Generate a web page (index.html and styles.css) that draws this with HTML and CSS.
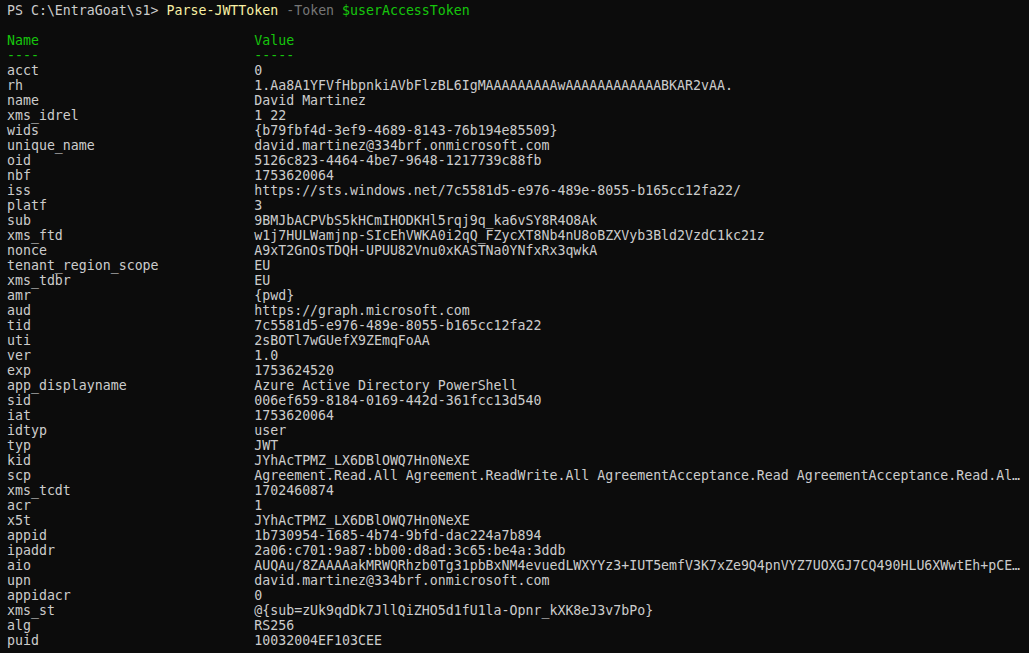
FILE: index.html
```html
<!DOCTYPE html>
<html lang="en">
<head>
<meta charset="utf-8">
<title>PowerShell - Parse-JWTToken</title>
<link rel="stylesheet" href="styles.css">
</head>
<body>
<main class="terminal">
  <div class="line"><span class="prompt">PS C:\EntraGoat\s1&gt; </span><span class="cmd">Parse-JWTToken</span> <span class="param">-Token</span> <span class="var">$userAccessToken</span></div>
  <div class="line"></div>
  <div class="table">
    <span class="head">Name</span><span class="head">Value</span>
    <span class="head">----</span><span class="head">-----</span>
    <span>acct</span><span>0</span>
    <span>rh</span><span>1.Aa8A1YFVfHbpnkiAVbFlzBL6IgMAAAAAAAAAwAAAAAAAAAAAABKAR2vAA.</span>
    <span>name</span><span>David Martinez</span>
    <span>xms_idrel</span><span>1 22</span>
    <span>wids</span><span>{b79fbf4d-3ef9-4689-8143-76b194e85509}</span>
    <span>unique_name</span><span>david.martinez@334brf.onmicrosoft.com</span>
    <span>oid</span><span>5126c823-4464-4be7-9648-1217739c88fb</span>
    <span>nbf</span><span>1753620064</span>
    <span>iss</span><span>https://sts.windows.net/7c5581d5-e976-489e-8055-b165cc12fa22/</span>
    <span>platf</span><span>3</span>
    <span>sub</span><span>9BMJbACPVbS5kHCmIHODKHl5rqj9q_ka6vSY8R4O8Ak</span>
    <span>xms_ftd</span><span>w1j7HULWamjnp-SIcEhVWKA0i2qQ_FZycXT8Nb4nU8oBZXVyb3Bld2VzdC1kc21z</span>
    <span>nonce</span><span>A9xT2GnOsTDQH-UPUU82Vnu0xKASTNa0YNfxRx3qwkA</span>
    <span>tenant_region_scope</span><span>EU</span>
    <span>xms_tdbr</span><span>EU</span>
    <span>amr</span><span>{pwd}</span>
    <span>aud</span><span>https://graph.microsoft.com</span>
    <span>tid</span><span>7c5581d5-e976-489e-8055-b165cc12fa22</span>
    <span>uti</span><span>2sBOTl7wGUefX9ZEmqFoAA</span>
    <span>ver</span><span>1.0</span>
    <span>exp</span><span>1753624520</span>
    <span>app_displayname</span><span>Azure Active Directory PowerShell</span>
    <span>sid</span><span>006ef659-8184-0169-442d-361fcc13d540</span>
    <span>iat</span><span>1753620064</span>
    <span>idtyp</span><span>user</span>
    <span>typ</span><span>JWT</span>
    <span>kid</span><span>JYhAcTPMZ_LX6DBlOWQ7Hn0NeXE</span>
    <span>scp</span><span>Agreement.Read.All Agreement.ReadWrite.All AgreementAcceptance.Read AgreementAcceptance.Read.Al…</span>
    <span>xms_tcdt</span><span>1702460874</span>
    <span>acr</span><span>1</span>
    <span>x5t</span><span>JYhAcTPMZ_LX6DBlOWQ7Hn0NeXE</span>
    <span>appid</span><span>1b730954-1685-4b74-9bfd-dac224a7b894</span>
    <span>ipaddr</span><span>2a06:c701:9a87:bb00:d8ad:3c65:be4a:3ddb</span>
    <span>aio</span><span>AUQAu/8ZAAAAakMRWQRhzb0Tg31pbBxNM4evuedLWXYYz3+IUT5emfV3K7xZe9Q4pnVYZ7UOXGJ7CQ490HLU6XWwtEh+pCE…</span>
    <span>upn</span><span>david.martinez@334brf.onmicrosoft.com</span>
    <span>appidacr</span><span>0</span>
    <span>xms_st</span><span>@{sub=zUk9qdDk7JllQiZHO5d1fU1la-Opnr_kXK8eJ3v7bPo}</span>
    <span>alg</span><span>RS256</span>
    <span>puid</span><span>10032004EF103CEE</span>
  </div>
</main>
</body>
</html>
```

FILE: styles.css
```css
html, body {
  margin: 0;
  padding: 0;
  background: #0c0c0c;
}

body {
  width: 1029px;
  height: 653px;
  overflow: hidden;
}

.terminal {
  padding: 3px 0 0 7px;
  font-family: "DejaVu Sans Mono", "Liberation Mono", monospace;
  font-size: 13.25px;
  line-height: 15px;
  color: #cccccc;
}

.line {
  height: 15px;
  white-space: pre;
}

.prompt {
  color: #cccccc;
}

.cmd {
  color: #f9f1a5;
}

.param {
  color: #767676;
}

.var {
  color: #16c60c;
}

.table {
  display: grid;
  grid-template-columns: 31ch 1fr;
  grid-auto-rows: 15px;
}

.table span {
  white-space: pre;
}

.table .head {
  color: #16c60c;
}
```
